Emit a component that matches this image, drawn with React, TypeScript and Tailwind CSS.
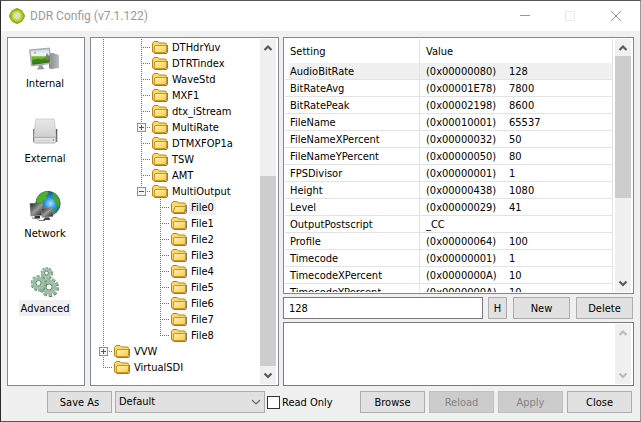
import React from 'react';

interface TreeNode {
  label: string;
  cells: string[];
  open?: boolean;
}

// Cell kinds: line = pass-through, tee = branch, end = last branch, plus/minus = expander
const tree: TreeNode[] = [
  { label: 'DTHdrYuv', cells: ['line', '', 'tee'] },
  { label: 'DTRTindex', cells: ['line', '', 'tee'] },
  { label: 'WaveStd', cells: ['line', '', 'tee'] },
  { label: 'MXF1', cells: ['line', '', 'tee'] },
  { label: 'dtx_iStream', cells: ['line', '', 'tee'] },
  { label: 'MultiRate', cells: ['line', '', 'plus'] },
  { label: 'DTMXFOP1a', cells: ['line', '', 'tee'] },
  { label: 'TSW', cells: ['line', '', 'tee'] },
  { label: 'AMT', cells: ['line', '', 'tee'] },
  { label: 'MultiOutput', cells: ['line', '', 'minus'] },
  { label: 'File0', cells: ['line', '', '', 'tee'], open: true },
  { label: 'File1', cells: ['line', '', '', 'tee'] },
  { label: 'File2', cells: ['line', '', '', 'tee'] },
  { label: 'File3', cells: ['line', '', '', 'tee'] },
  { label: 'File4', cells: ['line', '', '', 'tee'] },
  { label: 'File5', cells: ['line', '', '', 'tee'] },
  { label: 'File6', cells: ['line', '', '', 'tee'] },
  { label: 'File7', cells: ['line', '', '', 'tee'] },
  { label: 'File8', cells: ['line', '', '', 'end'] },
  { label: 'VVW', cells: ['plus'] },
  { label: 'VirtualSDI', cells: ['end'] },
];

const settings = [
  ['AudioBitRate', '(0x00000080)', '128'],
  ['BitRateAvg', '(0x00001E78)', '7800'],
  ['BitRatePeak', '(0x00002198)', '8600'],
  ['FileName', '(0x00010001)', '65537'],
  ['FileNameXPercent', '(0x00000032)', '50'],
  ['FileNameYPercent', '(0x00000050)', '80'],
  ['FPSDivisor', '(0x00000001)', '1'],
  ['Height', '(0x00000438)', '1080'],
  ['Level', '(0x00000029)', '41'],
  ['OutputPostscript', '_CC', ''],
  ['Profile', '(0x00000064)', '100'],
  ['Timecode', '(0x00000001)', '1'],
  ['TimecodeXPercent', '(0x0000000A)', '10'],
  ['TimecodeYPercent', '(0x0000000A)', '10'],
];

const TreeCell = ({ kind }: { kind: string }) => {
  const box = kind === 'plus' || kind === 'minus';
  return (
    <svg className="w-[19px] h-4 shrink-0" viewBox="0 0 19 16" shapeRendering="crispEdges" aria-hidden="true">
      {kind !== '' && (
        <path d={kind === 'end' || kind === 'minus' ? 'M9.5 0V9' : 'M9.5 0V16'} stroke="#707070" strokeDasharray="1 1" />
      )}
      {kind !== '' && kind !== 'line' && <path d="M9 8.5H19" stroke="#707070" strokeDasharray="1 1" />}
      {box && (
        <g>
          <rect x="5.5" y="4.5" width="8" height="8" fill="#f6f6f6" stroke="#919191" />
          <path d={kind === 'plus' ? 'M7 8.5h5M9.5 6v5' : 'M7 8.5h5'} stroke="#3a5795" fill="none" />
        </g>
      )}
    </svg>
  );
};

const FolderIcon = ({ open }: { open?: boolean }) => (
  <svg className="w-4 h-4 shrink-0 ml-px" viewBox="0 0 16 16" aria-hidden="true">
    <defs>
      <linearGradient id="folder" x1="0" y1="0" x2="1" y2="1">
        <stop offset="0" stopColor="#fff3b0" />
        <stop offset="1" stopColor="#fbcb45" />
      </linearGradient>
    </defs>
    <path d="M2.500 14.500h11.500q1.500 0 1.500-1.500V6" stroke="#7d7d7d" fill="none" />
    <path d="M.5 4.500L2 2.500h4L7.500 4h5.500q1.500 0 1.500 1.500v6.500q0 1.500-1.500 1.500H2Q.5 13.500.5 12z" fill="#fbd96b" stroke="#b98212" />
    {open ? (
      <path d="M4 7.500h9l2-.5-1.500 5.500q-.3 1-1.500 1H2z" fill="url(#folder)" stroke="#c18f1c" />
    ) : (
      <path d="M3 6.500h10q1.500 0 1.500 1v4.500q0 1.500-1.500 1.500H3.500q-1 0-1-1V7z" fill="url(#folder)" stroke="#c8951f" />
    )}
  </svg>
);

const Arrow = ({ dir, muted }: { dir: 'up' | 'down'; muted?: boolean }) => (
  <svg className="w-4 h-[17px] shrink-0" viewBox="0 0 16 17" aria-hidden="true">
    <path
      d={dir === 'up' ? 'M4.500 11l3.500-3.500L11.500 11' : 'M4.500 6.500L8 10l3.500-3.500'}
      fill="none"
      stroke={muted ? '#bcbcbc' : '#5a5a5a'}
      strokeWidth="2.200"
    />
  </svg>
);

const Scrollbar = ({ thumb, muted }: { thumb?: React.ReactNode; muted?: boolean }) => (
  <div className="flex flex-col justify-between w-4 shrink-0 bg-[#f0f0f0]">
    <Arrow dir="up" muted={muted} />
    {thumb}
    <Arrow dir="down" muted={muted} />
  </div>
);

const InternalIcon = () => (
  <svg className="w-8 h-8" viewBox="0 0 32 32" aria-hidden="true">
    <defs>
      <linearGradient id="sky" x1="0" y1="0" x2="0" y2="1">
        <stop offset="0" stopColor="#c4dbee" />
        <stop offset=".4" stopColor="#f3f8f4" />
        <stop offset=".48" stopColor="#7cc242" />
        <stop offset="1" stopColor="#2b6d10" />
      </linearGradient>
      <linearGradient id="tower" x1="0" y1="0" x2="1" y2="0">
        <stop offset="0" stopColor="#84898d" />
        <stop offset="1" stopColor="#b9bcc0" />
      </linearGradient>
    </defs>
    <path d="M20 13.500l4-.5 6 2v13l-8 1-2-1z" fill="url(#tower)" />
    <path d="M24 13v15.500" stroke="#9ba0a4" />
    <path d="M.5 10L20.500 8l1.500 15.500L2.500 26z" fill="#b9bdc1" stroke="#8e9398" strokeWidth=".7" />
    <path d="M1.700 11l18-1.800 1.200 13.300L3.500 24.700z" fill="url(#sky)" />
    <path d="M3 21q5-3 8-2t10-4v7L3.500 24.500z" fill="#2f7a12" opacity=".6" />
    <path d="M16.500 17l1.500-4 2 3v3l-3 1z" fill="#8c7b70" />
    <circle cx="6" cy="12.800" r="1.200" fill="#f6a56a" />
    <path d="M9.500 25.500l4-.5.5 2.500 1.500.8-1 .9-5.500.3-1-1 1.500-.8z" fill="#94989b" />
  </svg>
);

const ExternalIcon = () => (
  <svg className="w-8 h-8" viewBox="0 0 32 32" aria-hidden="true">
    <defs>
      <linearGradient id="drive" x1="0" y1="0" x2="0" y2="1">
        <stop offset="0" stopColor="#e9e9e9" />
        <stop offset="1" stopColor="#cfcfcf" />
      </linearGradient>
    </defs>
    <path d="M5 14v13M27.500 14v13" stroke="#555" strokeWidth="1.500" />
    <path d="M6.500 5q0-1 1-1h17q1 0 1 1L27 22H5z" fill="url(#drive)" stroke="#c2c2c2" strokeWidth=".7" />
    <path d="M5 22.500h22v4q0 1.500-1.500 1.500h-19Q5 28 5 26.500z" fill="#e2e2e2" stroke="#a2a2a2" strokeWidth=".8" />
    <path d="M7 25.500h14" stroke="#cfcfcf" />
    <circle cx="24.500" cy="25" r="1" fill="#4eb6e3" />
  </svg>
);

const NetworkIcon = () => (
  <svg className="w-8 h-8" viewBox="0 0 32 32" aria-hidden="true">
    <defs>
      <radialGradient id="sea" cx=".6" cy=".5" r=".55">
        <stop offset="0" stopColor="#a5e4ff" />
        <stop offset=".4" stopColor="#2f97e6" />
        <stop offset="1" stopColor="#0c3576" />
      </radialGradient>
      <linearGradient id="screen" x1="0" y1="0" x2="1" y2="1">
        <stop offset="0" stopColor="#1a1a1a" />
        <stop offset=".5" stopColor="#9a9a9a" />
        <stop offset="1" stopColor="#111" />
      </linearGradient>
    </defs>
    <circle cx="19" cy="13.500" r="12.500" fill="url(#sea)" />
    <path d="M8 8q4-6 10-7l2 2-3 3 1 3-4 2-2 4-4-1-1-3z" fill="#4fb02c" />
    <path d="M23 2q5 2 7.500 8l-.5 7-3-2-1-4-3-3 1-3z" fill="#43a52c" />
    <path d="M24 20l4-2-2 5-2 1z" fill="#3c9a3a" />
    <path d="M1 13.500l13-.5.5 12L2 26z" fill="url(#screen)" stroke="#666" strokeWidth=".6" />
    <path d="M6 26h5v2.500H5z" fill="#333" />
    <path d="M12.500 18.500l11-1 .5 9-11 .8z" fill="url(#screen)" stroke="#888" strokeWidth=".6" />
    <path d="M16 27.500l4-.3 1.500 2.800H14z" fill="#444" />
    <path d="M3 28l5 .5 2 2h6" stroke="#777" fill="none" />
  </svg>
);

const Gear = ({ x, y, r }: { x: number; y: number; r: number }) => {
  // ten teeth spread evenly over the rim
  const step = (2 * Math.PI * r * 0.85) / 10;
  return (
    <g>
      <circle cx={x + 0.5} cy={y + 0.6} r={r * 0.85} fill="none" stroke="#5c7f4e" strokeWidth={r * 0.3} strokeDasharray={`${step * 0.6} ${step * 0.4}`} />
      <circle cx={x} cy={y} r={r * 0.85} fill="none" stroke="#93b59e" strokeWidth={r * 0.3} strokeDasharray={`${step * 0.6} ${step * 0.4}`} />
      <circle cx={x} cy={y} r={r * 0.56} fill="none" stroke="#9dbfab" strokeWidth={r * 0.46} />
      <circle cx={x} cy={y} r={r * 0.32} fill="#fff" stroke="#5c7f4e" strokeWidth=".9" />
    </g>
  );
};

const AdvancedIcon = () => (
  <svg className="w-8 h-8" viewBox="0 0 32 32" aria-hidden="true">
    <Gear x={17.5} y={8} r={6} />
    <Gear x={20} y={22} r={9.5} />
    <Gear x={9.5} y={18} r={8} />
  </svg>
);

const sections = [
  { label: 'Internal', icon: <InternalIcon /> },
  { label: 'External', icon: <ExternalIcon /> },
  { label: 'Network', icon: <NetworkIcon /> },
  { label: 'Advanced', icon: <AdvancedIcon />, active: true },
];

const Button = ({ children, className = 'w-[65px]', disabled }: { children: React.ReactNode; className?: string; disabled?: boolean }) => (
  <button
    disabled={disabled}
    className={`h-[22px] shrink-0 border pt-px text-center ${className} ${disabled ? 'bg-[#cccccc] border-[#bfbfbf] text-[#838383]' : 'bg-[#e1e1e1] border-[#adadad] text-black'}`}
  >
    {children}
  </button>
);

const TitleBar = () => (
  <header className="flex items-center h-[30px] shrink-0 bg-white pl-2">
    <svg className="w-4 h-4" viewBox="0 0 16 16" aria-hidden="true">
      <defs>
        <radialGradient id="orb">
          <stop offset="0" stopColor="#d9ecc0" />
          <stop offset=".4" stopColor="#c5dc8c" />
          <stop offset=".65" stopColor="#c9c800" />
          <stop offset="1" stopColor="#4f9a2c" />
        </radialGradient>
      </defs>
      <path d="M8 0l2.500 1L13 2.500 15 5.500 16 8l-1 2.500-2 3L10.500 15 8 16l-2.500-1L3 13.500l-2-3L0 8l1-2.500 2-3L5.500 1z" fill="url(#orb)" />
      <circle cx="8" cy="7.500" r="3.300" fill="#cfe6c2" />
    </svg>
    <h1 className="flex-1 ml-[5px] font-[Roboto,'Noto_Sans',sans-serif] text-[12px] leading-4 text-[#999999]">DDR Config (v7.1.122)</h1>
    <div className="flex">
      <button aria-label="Minimize" className="w-[45px] h-[30px] flex items-center justify-center">
        <svg className="w-[10px] h-[10px]" viewBox="0 0 10 10"><path d="M0 4.500h10" stroke="#999" /></svg>
      </button>
      <button aria-label="Maximize" disabled className="w-[45px] h-[30px] flex items-center justify-center">
        <svg className="w-[10px] h-[10px]" viewBox="0 0 10 10"><path d="M.5.5h9v9h-9z" fill="none" stroke="#e8e8e8" /></svg>
      </button>
      <button aria-label="Close window" className="w-12 h-[30px] flex items-center justify-center">
        <svg className="w-[10px] h-[10px]" viewBox="0 0 10 10"><path d="M0 0l10 10M10 0L0 10" stroke="#888" /></svg>
      </button>
    </div>
  </header>
);

const App: React.FC = () => {
  return (
    <div className="flex flex-col h-screen border border-t-[#555555] border-l-[#2e2a2c] border-r-[#9a9a9a] border-b-[#555555] bg-[#f0f0f0] font-['DejaVu_Sans_Condensed','DejaVu_Sans',sans-serif] text-[11px] leading-4 text-black overflow-hidden">
      <TitleBar />

      <main className="flex flex-1 min-h-0 pt-[6px] px-[6px]">
        {/* Sections */}
        <nav className="flex flex-col items-center gap-6 w-[78px] shrink-0 mr-[5px] pt-[2px] pr-[2px] bg-white border border-[#828790]">
          {sections.map((s) => (
            <button key={s.label} className="flex flex-col items-center gap-[3px]">
              {s.icon}
              <span className={`h-4 px-[2px] leading-[18px] ${s.active ? 'bg-[#f0f0f0]' : ''}`}>{s.label}</span>
            </button>
          ))}
        </nav>

        {/* Tree */}
        <div className="flex w-[189px] shrink-0 mr-1 bg-white border border-[#828790] p-px">
          <ul className="flex-1 pl-[2px] overflow-hidden">
            {tree.map((node) => (
              <li key={node.label} className="flex h-4">
                {node.cells.map((kind, i) => (
                  <TreeCell key={i} kind={kind} />
                ))}
                <FolderIcon open={node.open} />
                <span className={`h-4 ml-[2px] px-[2px] leading-[18px] ${node.open ? 'bg-[#f0f0f0]' : ''}`}>{node.label}</span>
              </li>
            ))}
          </ul>
          <Scrollbar thumb={<div className="h-[190px] mt-auto mb-px bg-[#cdcdcd]" />} />
          <div className="w-px" />
        </div>

        {/* Settings */}
        <section className="flex flex-col flex-1 min-w-0">
          <div className="flex flex-1 min-h-0 bg-white border border-[#828790] p-px">
            <div className="flex-1 overflow-hidden">
              <table className="w-full table-fixed border-separate border-spacing-0">
                <thead>
                  <tr className="h-6 text-left">
                    <th className="w-[135px] pl-[5px] pt-px font-normal border-r border-[#e3e3e3]">Setting</th>
                    <th className="pl-[6px] pt-px font-normal border-r border-[#e3e3e3]">Value</th>
                  </tr>
                </thead>
                <tbody className="leading-[14px]">
                  {settings.map(([name, value, decimal], i) => (
                    <tr key={name}>
                      <td className={`pl-[5px] pt-[2px] border-r border-b border-[#e3e3e3] ${i === 0 ? 'bg-[linear-gradient(to_right,white_4px,#f0f0f0_4px)]' : ''}`}>
                        {name}
                      </td>
                      <td className={`pl-[6px] pt-[2px] border-r border-b border-[#e3e3e3] ${i === 0 ? 'bg-[#f0f0f0]' : ''}`}>
                        <div className="flex">
                          <span className="w-[83px]">{value}</span>
                          <span>{decimal}</span>
                        </div>
                      </td>
                    </tr>
                  ))}
                </tbody>
              </table>
            </div>
            <div className="w-[2px]" />
            <Scrollbar thumb={<div className="h-[142px] mb-auto bg-[#cdcdcd]" />} />
            <div className="w-px" />
          </div>

          <div className="flex items-center mt-[3px]">
            <input
              aria-label="Value"
              defaultValue="128"
              className="flex-1 min-w-0 h-[22px] px-[5px] bg-white border border-[#7a7a7a] outline-none"
            />
            <Button className="w-[19px] ml-[5px]">H</Button>
            <Button className="w-[57px] ml-[6px]">New</Button>
            <Button className="w-[57px] ml-[6px] mr-px">Delete</Button>
          </div>

          <div className="flex h-16 mt-[3px] bg-white border border-[#7a7a7a] p-px">
            <textarea aria-label="Description" className="flex-1 resize-none outline-none" />
            <Scrollbar muted />
            <div className="w-px" />
          </div>
        </section>
      </main>

      <footer className="flex items-center shrink-0 pt-1 pb-2 pl-[46px] pr-2">
        <Button className="w-[65px] mt-px">Save As</Button>
        <div className="relative ml-[3px] mr-[2px]">
          <select aria-label="Preset" className="block appearance-none w-[150px] h-[22px] px-[3px] bg-[#e1e1e1] border border-[#adadad]">
            <option>Default</option>
          </select>
          <svg className="absolute right-1 top-[6px] w-[10px] h-[10px] pointer-events-none" viewBox="0 0 10 10">
            <path d="M1 3l4 4 4-4" fill="none" stroke="#666" strokeWidth="1.200" />
          </svg>
        </div>
        <label className="flex items-center gap-[2px] mt-[2px] mr-auto">
          <input type="checkbox" className="appearance-none w-[13px] h-[13px] bg-white border border-[#333333]" />
          Read Only
        </label>
        <div className="flex gap-1 mt-px">
          <Button>Browse</Button>
          <Button disabled>Reload</Button>
          <Button disabled>Apply</Button>
          <Button>Close</Button>
        </div>
      </footer>
    </div>
  );
};

export default App;
